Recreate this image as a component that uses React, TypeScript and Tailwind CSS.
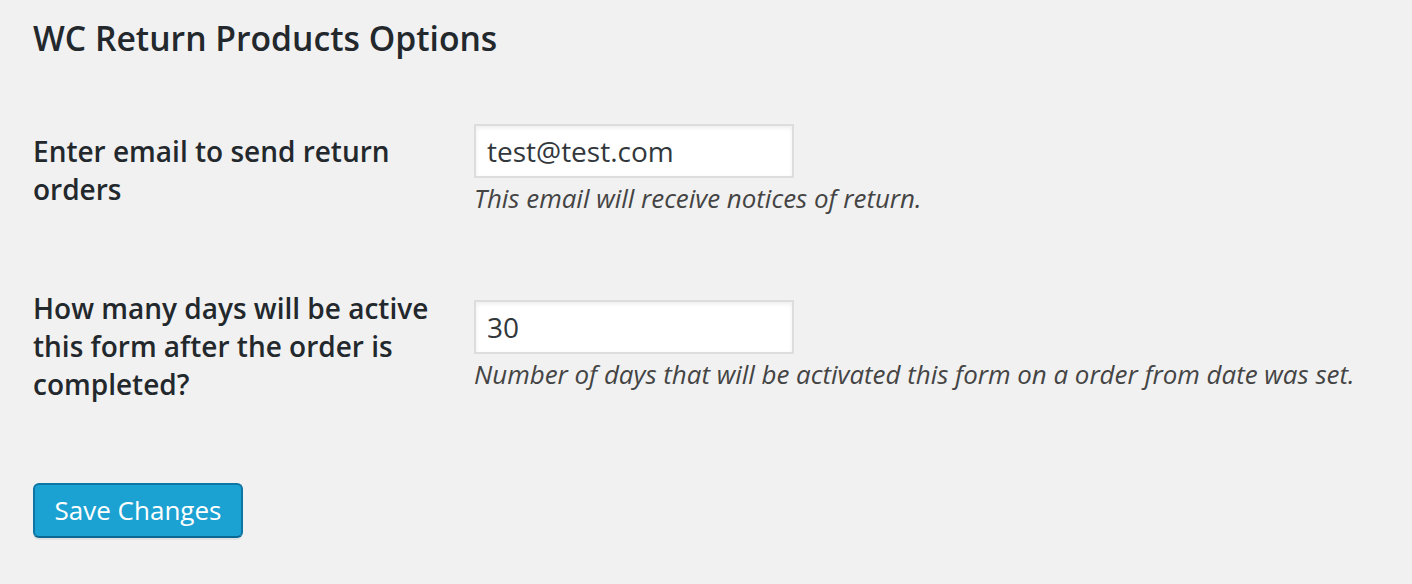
import React from 'react';

const fields = [
  {
    label: 'Enter email to send return orders',
    value: 'test@test.com',
    help: 'This email will receive notices of return.',
    gap: 'mt-[64px]',
  },
  {
    label: 'How many days will be active this form after the order is completed?',
    value: '30',
    help: 'Number of days that will be activated this form on a order from date was set.',
    gap: 'mt-[73px]',
  },
];

export default function App() {
  return (
    <div className="min-h-[584px] w-full bg-[#f1f1f1] pl-[33px] text-[#23282d] font-['Open_Sans',sans-serif]">
      <h2 className="pt-[16px] text-[33.7px] font-semibold leading-[44px]">WC Return Products Options</h2>

      {fields.map((f) => (
        <div key={f.label} className={`flex items-center ${f.gap}`}>
          <div className="w-[441px] shrink-0 pr-[41px] text-[28px] font-semibold leading-[38px]">{f.label}</div>
          <div className="flex flex-col">
            <input
              type="text"
              defaultValue={f.value}
              className="h-[54px] w-[320px] border-2 border-[#dddddd] bg-white px-[11px] text-[28px] text-[#32373c] shadow-[inset_0_2px_4px_rgba(0,0,0,0.07)] outline-none"
            />
            <p className="mt-[2px] text-[25.9px] italic leading-[36px] text-[#444]">{f.help}</p>
          </div>
        </div>
      ))}

      <button
        type="button"
        className="mt-[80px] h-[55px] w-[210px] rounded-[6px] border-2 border-[#0e76a5] border-b-[#0b6892] bg-[#1ba2d2] text-[26px] text-white shadow-[0_2px_0_rgba(0,0,0,0.06)]"
      >
        Save Changes
      </button>
    </div>
  );
}
